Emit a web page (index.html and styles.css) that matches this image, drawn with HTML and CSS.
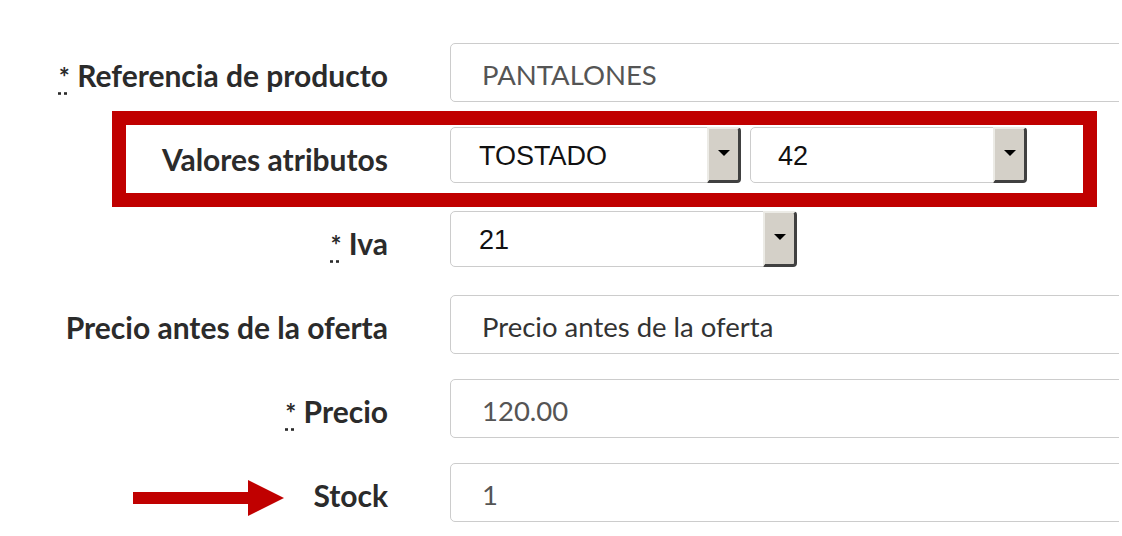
FILE: index.html
```html
<!DOCTYPE html>
<html lang="es">
<head>
    <meta charset="UTF-8">
    <title>Producto</title>
    <link rel="stylesheet" href="styles.css">
</head>
<body>
<div class="page">
    <form class="form-horizontal">
        <div class="form-row">
            <label class="control-label"><abbr title="requerido">*</abbr> Referencia de producto</label>
            <input class="form-control" type="text" value="PANTALONES">
        </div>
        <div class="form-row">
            <label class="control-label">Valores atributos</label>
            <div class="select-group">
                <div class="fake-select select-color">
                    <span class="select-value">TOSTADO</span>
                    <span class="select-button"></span>
                </div>
                <div class="fake-select select-size">
                    <span class="select-value">42</span>
                    <span class="select-button"></span>
                </div>
            </div>
        </div>
        <div class="form-row">
            <label class="control-label"><abbr title="requerido">*</abbr> Iva</label>
            <div class="fake-select select-iva">
                <span class="select-value">21</span>
                <span class="select-button"></span>
            </div>
        </div>
        <div class="form-row">
            <label class="control-label">Precio antes de la oferta</label>
            <input class="form-control" type="text" placeholder="Precio antes de la oferta">
        </div>
        <div class="form-row">
            <label class="control-label"><abbr title="requerido">*</abbr> Precio</label>
            <input class="form-control" type="text" value="120.00">
        </div>
        <div class="form-row">
            <label class="control-label">Stock</label>
            <input class="form-control" type="text" value="1">
        </div>
    </form>

    <!-- annotations drawn over the screenshot -->
    <div class="highlight-box"></div>
    <svg class="pointer-arrow" width="152" height="37" viewBox="0 0 152 37">
        <rect x="0" y="12" width="116" height="12" fill="#c00000"/>
        <polygon points="115,0 151,18 115,36" fill="#c00000"/>
    </svg>
</div>
</body>
</html>
```

FILE: styles.css
```css
html, body {
    margin: 0;
    background: #fff;
}

.page {
    position: relative;
    width: 1119px;
    height: 536px;
    overflow: hidden;
}

.form-horizontal {
    display: flex;
    flex-direction: column;
    gap: 26px;
    padding-top: 43px;
}

.form-row {
    display: flex;
    align-items: flex-start;
    height: 58px;
}

.control-label {
    flex: 0 0 388px;
    box-sizing: border-box;
    padding-top: 14px;
    margin-right: 62px;
    text-align: right;
    white-space: nowrap;
    font-family: Lato, sans-serif;
    font-weight: bold;
    font-size: 30px;
    color: #2b2b2b;
}

.control-label abbr {
    font-size: 26px;
    text-decoration: underline dotted;
    text-underline-offset: 5px;
    cursor: help;
}

.form-control {
    box-sizing: border-box;
    flex: none;
    width: 800px;
    height: 59px;
    padding: 4px 31px 0;
    border: 1px solid #ccc;
    border-radius: 5px;
    font-family: Lato, sans-serif;
    font-size: 27.5px;
    color: #555;
    background: #fff;
}

.form-control::placeholder {
    color: #333;
}

.select-group {
    display: flex;
    gap: 9px;
}

.fake-select {
    box-sizing: border-box;
    display: flex;
    align-items: center;
    height: 56px;
    border: 1px solid #ccc;
    border-radius: 5px;
    background: #fff;
    font-family: "Liberation Sans", Arial, sans-serif;
    font-size: 27px;
    color: #111;
}

.select-color { width: 291px; }
.select-size { width: 277px; }
.select-iva { width: 347px; }

.select-value {
    flex: 1;
    padding: 3px 0 0 28px;
}

.select-size .select-value {
    padding-left: 27px;
}

.select-button {
    position: relative;
    box-sizing: border-box;
    align-self: stretch;
    width: 34px;
    margin: -1px -1px -1px 0;
    background: #d4d0c8;
    border-top: 2px solid #ecebe6;
    border-left: 2px solid #ecebe6;
    border-right: 3px solid #404040;
    border-bottom: 3px solid #404040;
    border-radius: 0 4px 4px 0;
}

.select-button::after {
    content: "";
    position: absolute;
    left: 50%;
    top: 50%;
    margin: -5px 0 0 -6px;
    border-left: 6px solid transparent;
    border-right: 6px solid transparent;
    border-top: 6px solid #000;
}

.highlight-box {
    position: absolute;
    left: 112px;
    top: 111px;
    width: 957px;
    height: 68px;
    border: 14px solid #c00000;
}

.pointer-arrow {
    position: absolute;
    left: 133px;
    top: 480px;
}
```
